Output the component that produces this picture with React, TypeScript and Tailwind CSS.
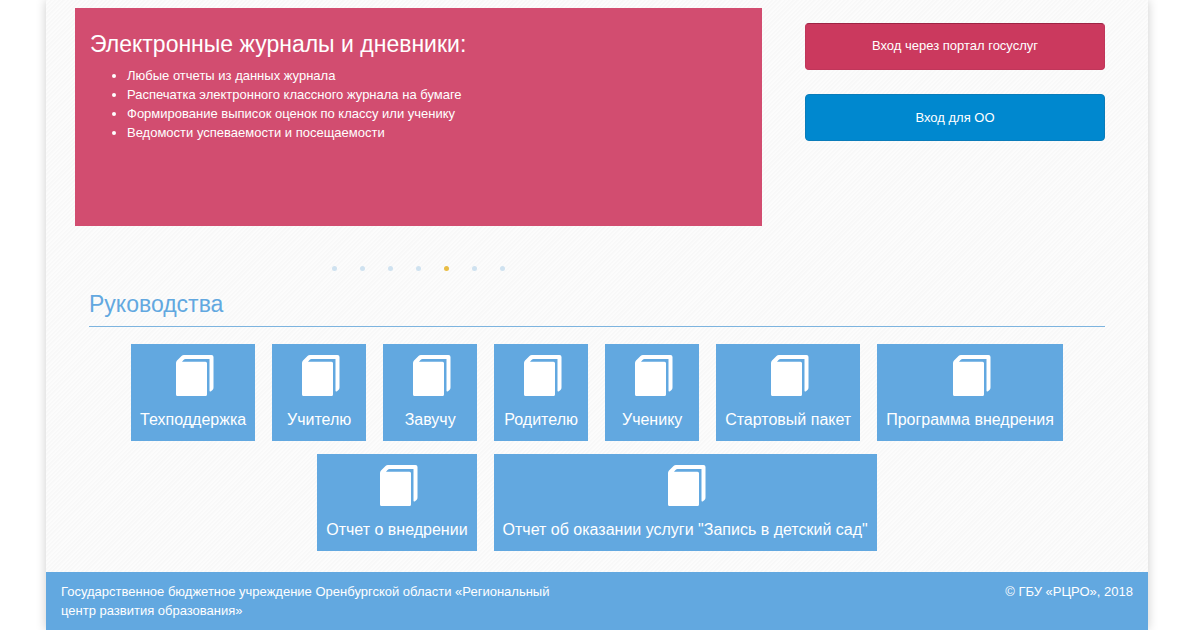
const features = [
  "Любые отчеты из данных журнала",
  "Распечатка электронного классного журнала на бумаге",
  "Формирование выписок оценок по классу или ученику",
  "Ведомости успеваемости и посещаемости",
];

const guides = [
  "Техподдержка",
  "Учителю",
  "Завучу",
  "Родителю",
  "Ученику",
  "Стартовый пакет",
  "Программа внедрения",
  "Отчет о внедрении",
  'Отчет об оказании услуги "Запись в детский сад"',
];

const SLIDES = 7;
const ACTIVE_SLIDE = 4;

function BookIcon() {
  return (
    <svg width="42" height="41" viewBox="-4 0 42 41" fill="#ffffff" aria-hidden="true">
      <path d="M0 8Q0 6.5 1 5.500L5.500 1Q6.500 0 8 0H35.500Q37.500 0 37.500 2V32.500Q37.500 34 36.500 35L35 36.200Q33.500 37.200 33.500 35.500V4H9.500Q8.500 4 7.500 5L6 6.800H29.500Q31 6.800 31 8.300V39.500Q31 41 29.500 41H1.500Q0 41 0 39.500Z" />
    </svg>
  );
}

function GuideTile({ title }: { title: string }) {
  return (
    <a
      href="#"
      className="flex h-[97px] min-w-[94px] flex-col items-center bg-[#62a8e0] px-[9px] pt-[11px] text-base leading-5 text-white"
    >
      <BookIcon />
      <span className="mt-[14px] whitespace-nowrap">{title}</span>
    </a>
  );
}

export default function App() {
  return (
    <div className="min-h-screen overflow-hidden bg-white pl-[46px] pr-[52px] font-['Liberation_Sans',Arial,sans-serif] text-[13px] leading-[19px]">
      <div className="flex min-h-screen flex-col bg-[#fbfbfb] bg-[repeating-linear-gradient(135deg,#f8f8f8_0px,#f8f8f8_1px,#fcfcfc_2px,#fcfcfc_3px)] shadow-[0_0_10px_rgba(0,0,0,0.2)]">
        <main className="flex-1 pb-[21px] pl-[29px] pr-[43px] pt-2">
          <div className="flex gap-[43px]">
            <section className="h-[218px] flex-1 bg-[#d24d70] px-[15px] pt-[22px] text-white">
              <h1 className="text-[23px] leading-7">Электронные журналы и дневники:</h1>
              <ul className="mt-2 list-disc pl-[37px]">
                {features.map((feature) => (
                  <li key={feature}>{feature}</li>
                ))}
              </ul>
            </section>

            <div className="flex w-[300px] flex-col gap-6 pt-[15px]">
              <button
                type="button"
                className="h-[47px] rounded-[4px] border border-[#c0365a] border-t-[#9c2444] bg-[#cb395e] pb-[2px] text-white"
              >
                Вход через портал госуслуг
              </button>
              <button
                type="button"
                className="h-[47px] rounded-[4px] border border-[#0a7cba] bg-[#0088cf] text-white"
              >
                Вход для ОО
              </button>
            </div>
          </div>

          <div className="mt-10 flex w-[687px] justify-center gap-[23px]">
            {Array.from({ length: SLIDES }, (_, i) => (
              <button
                key={i}
                type="button"
                aria-label={`Слайд ${i + 1}`}
                className={i === ACTIVE_SLIDE ? "size-[5px] rounded-full bg-[#e9bd45]" : "size-[5px] rounded-full bg-[#cfe2f0]"}
              />
            ))}
          </div>

          <section className="ml-[14px] mt-[19px]">
            <h2 className="border-b border-[#7db4df] pb-2 text-[23px] leading-7 text-[#62a8e0]">Руководства</h2>
            <div className="mt-[17px] flex flex-wrap justify-center gap-x-[17px] gap-y-[13px]">
              {guides.map((title) => (
                <GuideTile key={title} title={title} />
              ))}
            </div>
          </section>
        </main>

        <footer className="flex min-h-[58px] items-start justify-between bg-[#62a8e0] px-[15px] pt-[10px] text-white">
          <p className="w-[520px]">
            Государственное бюджетное учреждение Оренбургской области «Региональный центр развития образования»
          </p>
          <p>© ГБУ «РЦРО», 2018</p>
        </footer>
      </div>
    </div>
  );
}
